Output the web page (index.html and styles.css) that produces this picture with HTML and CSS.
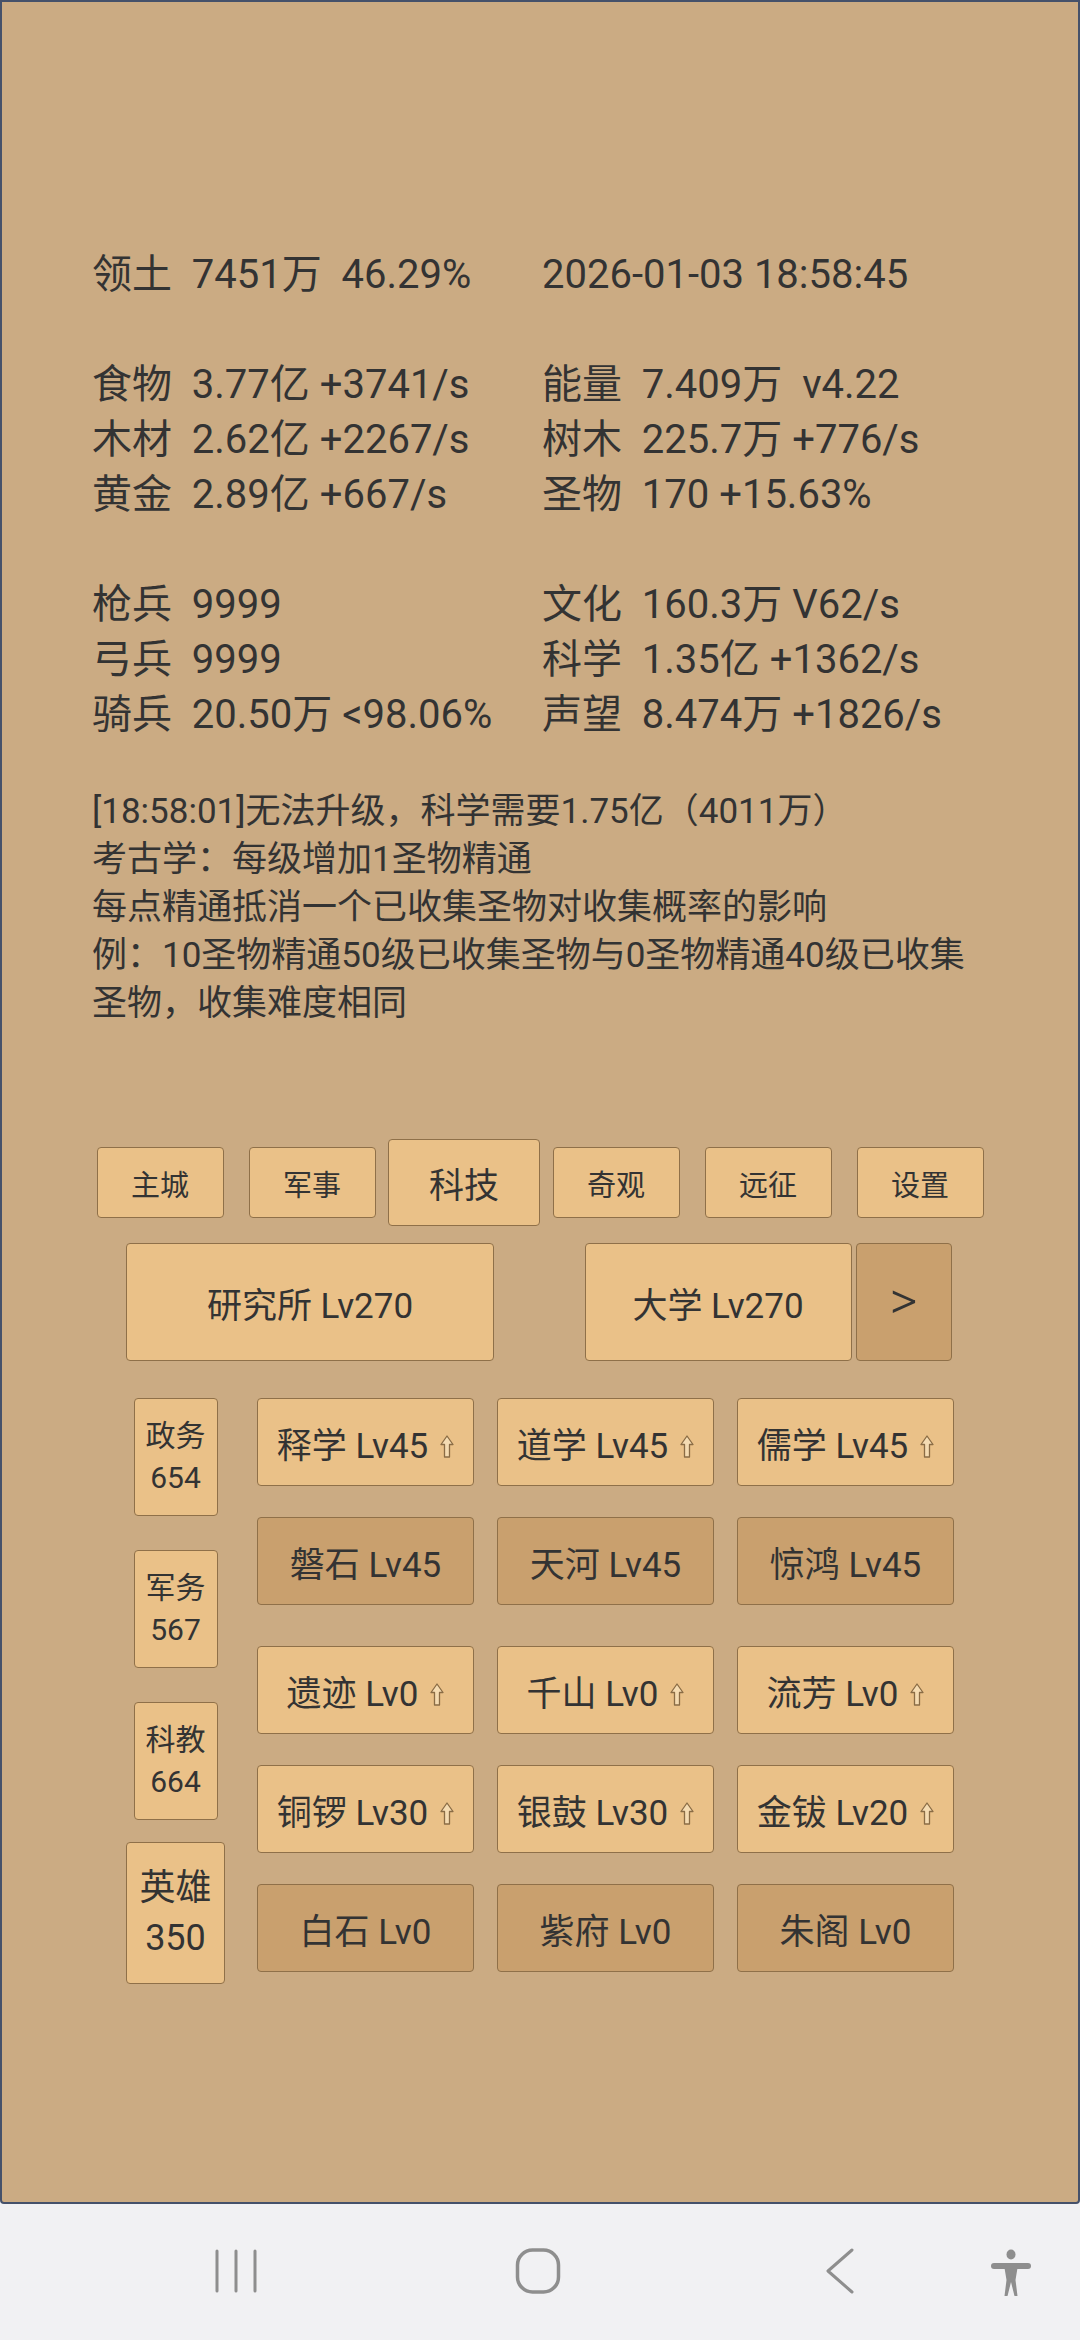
FILE: index.html
```html
<!DOCTYPE html>
<html lang="zh-CN">
<head>
<meta charset="utf-8">
<title>科技</title>
<link rel="stylesheet" href="styles.css">
</head>
<body>
<div class="app">
  <div class="info">
    <div class="stat-group">
      <div class="cell">领土  7451万  46.29%</div>
      <div class="cell">2026-01-03 18:58:45</div>
    </div>
    <div class="stat-group">
      <div class="cell">食物  3.77亿 +3741/s</div>
      <div class="cell">能量  7.409万  v4.22</div>
      <div class="cell">木材  2.62亿 +2267/s</div>
      <div class="cell">树木  225.7万 +776/s</div>
      <div class="cell">黄金  2.89亿 +667/s</div>
      <div class="cell">圣物  170 +15.63%</div>
    </div>
    <div class="stat-group">
      <div class="cell">枪兵  9999</div>
      <div class="cell">文化  160.3万 V62/s</div>
      <div class="cell">弓兵  9999</div>
      <div class="cell">科学  1.35亿 +1362/s</div>
      <div class="cell">骑兵  20.50万 &lt;98.06%</div>
      <div class="cell">声望  8.474万 +1826/s</div>
    </div>
    <div class="message">
      <div>[18:58:01]无法升级，科学需要1.75亿（4011万）</div>
      <div>考古学：每级增加1圣物精通</div>
      <div>每点精通抵消一个已收集圣物对收集概率的影响</div>
      <div>例：10圣物精通50级已收集圣物与0圣物精通40级已收集圣物，收集难度相同</div>
    </div>
  </div>

  <div class="tabs">
    <div class="tab">主城</div>
    <div class="tab">军事</div>
    <div class="tab sel">科技</div>
    <div class="tab">奇观</div>
    <div class="tab">远征</div>
    <div class="tab">设置</div>
  </div>

  <div class="buildings">
    <div class="half">
      <div class="bld wide">研究所 Lv270</div>
    </div>
    <div class="half">
      <div class="bld-group">
        <div class="bld mid">大学 Lv270</div>
        <div class="bld next">&gt;</div>
      </div>
    </div>
  </div>

  <div class="tech-area">
    <div class="side">
      <div class="side-btn s1">政务<br>654</div>
      <div class="side-btn s2">军务<br>567</div>
      <div class="side-btn s3">科教<br>664</div>
      <div class="side-btn sel">英雄<br>350</div>
    </div>
    <div class="tech-grid">
      <div class="tb">释学 Lv45<svg class="up" viewBox="0 0 14 23"><path d="M7 1 L13 9.5 H9.5 V22 H4.5 V9.5 H1 Z"/></svg></div>
      <div class="tb">道学 Lv45<svg class="up" viewBox="0 0 14 23"><path d="M7 1 L13 9.5 H9.5 V22 H4.5 V9.5 H1 Z"/></svg></div>
      <div class="tb">儒学 Lv45<svg class="up" viewBox="0 0 14 23"><path d="M7 1 L13 9.5 H9.5 V22 H4.5 V9.5 H1 Z"/></svg></div>
      <div class="tb dim">磐石 Lv45</div>
      <div class="tb dim">天河 Lv45</div>
      <div class="tb dim">惊鸿 Lv45</div>
      <div class="tb r3">遗迹 Lv0<svg class="up" viewBox="0 0 14 23"><path d="M7 1 L13 9.5 H9.5 V22 H4.5 V9.5 H1 Z"/></svg></div>
      <div class="tb r3">千山 Lv0<svg class="up" viewBox="0 0 14 23"><path d="M7 1 L13 9.5 H9.5 V22 H4.5 V9.5 H1 Z"/></svg></div>
      <div class="tb r3">流芳 Lv0<svg class="up" viewBox="0 0 14 23"><path d="M7 1 L13 9.5 H9.5 V22 H4.5 V9.5 H1 Z"/></svg></div>
      <div class="tb">铜锣 Lv30<svg class="up" viewBox="0 0 14 23"><path d="M7 1 L13 9.5 H9.5 V22 H4.5 V9.5 H1 Z"/></svg></div>
      <div class="tb">银鼓 Lv30<svg class="up" viewBox="0 0 14 23"><path d="M7 1 L13 9.5 H9.5 V22 H4.5 V9.5 H1 Z"/></svg></div>
      <div class="tb">金钹 Lv20<svg class="up" viewBox="0 0 14 23"><path d="M7 1 L13 9.5 H9.5 V22 H4.5 V9.5 H1 Z"/></svg></div>
      <div class="tb dim">白石 Lv0</div>
      <div class="tb dim">紫府 Lv0</div>
      <div class="tb dim">朱阁 Lv0</div>
    </div>
  </div>
</div>

<div class="navbar">
  <div class="nav-slot">
    <svg class="ico" width="42" height="44" viewBox="0 0 42 44"><g stroke="#8e8e8e" stroke-width="3" stroke-linecap="round"><line x1="2" y1="2" x2="2" y2="42"/><line x1="21" y1="2" x2="21" y2="42"/><line x1="40" y1="2" x2="40" y2="42"/></g></svg>
  </div>
  <div class="nav-slot">
    <svg class="ico" width="46" height="46" viewBox="0 0 46 46"><rect x="2.5" y="2" width="41" height="42" rx="15" ry="15" fill="none" stroke="#8e8e8e" stroke-width="3.5"/></svg>
  </div>
  <div class="nav-slot">
    <svg class="ico" width="30" height="46" viewBox="0 0 30 46"><polyline points="27,2 3,23 27,44" fill="none" stroke="#8e8e8e" stroke-width="3" stroke-linecap="round" stroke-linejoin="round"/></svg>
  </div>
  <div class="nav-slot small">
    <svg class="ico" width="40" height="48" viewBox="0 0 40 48"><g fill="#8e8e8e"><ellipse cx="20" cy="5.5" rx="4.5" ry="5"/><rect x="0" y="14" width="40" height="6" rx="3"/><path d="M13.5 19 H26.5 L24.5 31 L26.5 47 H23.5 L20 33 L16.5 47 H13.5 L15.5 31 Z"/></g></svg>
  </div>
</div>
</body>
</html>
```

FILE: styles.css
```css
* {
  box-sizing: border-box;
}

html, body {
  margin: 0;
  padding: 0;
}

body {
  width: 1080px;
  height: 2340px;
  background: #f1f1f3;
  font-family: Roboto, "Noto Sans CJK SC", sans-serif;
  color: #333333;
  overflow: hidden;
}

.app {
  width: 1080px;
  height: 2204px;
  background: #cbab83;
  border: 2px solid #45516a;
  border-radius: 0 0 4px 4px;
  overflow: hidden;
}

.info {
  padding: 245px 0 0 90px;
}

.stat-group {
  display: grid;
  grid-template-columns: 450px 450px;
  font-size: 40px;
  line-height: 55px;
  margin-bottom: 55px;
}

.stat-group:nth-child(3) {
  margin-bottom: 0;
}

.cell {
  white-space: pre;
}

.message {
  width: 900px;
  margin-top: 46px;
  font-size: 35px;
  line-height: 48px;
}

.tabs {
  width: 912px;
  margin: 111px auto 0;
  display: grid;
  grid-template-columns: repeat(6, 152px);
  height: 87px;
}

.tab {
  margin: 8px 12.5px;
  background: #eac188;
  border: 1.5px solid #8f7049;
  border-radius: 4px;
  display: flex;
  align-items: center;
  justify-content: center;
  font-size: 29px;
}

.tab.sel {
  margin: 0;
  font-size: 35px;
}

.buildings {
  width: 912px;
  margin: 17px auto 0;
  display: grid;
  grid-template-columns: 456px 456px;
  height: 118px;
}

.half {
  display: flex;
  justify-content: center;
}

.bld {
  height: 118px;
  background: #eac188;
  border: 1.5px solid #8f7049;
  border-radius: 4px;
  display: flex;
  align-items: center;
  justify-content: center;
  font-size: 35px;
}

.bld.wide {
  width: 368px;
  margin-right: 4px;
}

.bld-group {
  display: flex;
  gap: 4px;
}

.bld.mid {
  width: 267px;
}

.bld.next {
  width: 96px;
  background: #c9a06e;
  font-size: 54px;
  font-weight: 300;
  padding-bottom: 4px;
}

.tech-area {
  width: 828px;
  margin: 37px auto 0;
  display: flex;
  gap: 32px;
}

.side {
  width: 99px;
  display: flex;
  flex-direction: column;
  align-items: center;
}

.side-btn {
  width: 84px;
  height: 118px;
  background: #eac188;
  border: 1.5px solid #8f7049;
  border-radius: 4px;
  display: flex;
  align-items: center;
  justify-content: center;
  text-align: center;
  font-size: 30px;
  line-height: 42px;
}

.side-btn.s2,
.side-btn.s3 {
  margin-top: 34px;
}

.side-btn.sel {
  width: 99px;
  height: 142px;
  margin-top: 22px;
  font-size: 36px;
  line-height: 50px;
}

.tech-grid {
  display: grid;
  grid-template-columns: repeat(3, 217px);
  grid-template-rows: 88px 88px 98px 88px 88px;
  column-gap: 23px;
  row-gap: 31px;
  align-content: start;
}

.tb {
  background: #eac188;
  border: 1.5px solid #8f7049;
  border-radius: 4px;
  display: flex;
  align-items: center;
  justify-content: center;
  font-size: 35px;
  white-space: nowrap;
}

.tb.dim {
  background: #c9a06e;
}

.tb.r3 {
  margin-top: 10px;
}

.up {
  width: 14px;
  height: 23px;
  margin-left: 12px;
  margin-top: 8px;
  fill: #f4dbb2;
  stroke: #8a6c45;
  stroke-width: 1.3;
  stroke-linejoin: round;
}

.navbar {
  height: 136px;
  display: flex;
  align-items: center;
  padding-left: 85px;
  padding-bottom: 2px;
}

.nav-slot {
  width: 302px;
  display: flex;
  justify-content: center;
}

.nav-slot.small {
  width: 40px;
  padding-top: 4px;
}

.ico {
  display: block;
}
```
